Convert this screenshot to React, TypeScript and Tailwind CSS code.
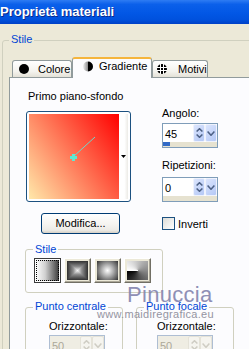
import React from "react";

function ChevUp({ c }: { c: string }) {
  return (
    <svg width="7" height="4" viewBox="0 0 7 4">
      <polyline points="0.6,3.5 3.5,0.7 6.4,3.5" fill="none" stroke={c} strokeWidth="1.5" />
    </svg>
  );
}

function ChevDown({ c, w = 7, h = 4 }: { c: string; w?: number; h?: number }) {
  return (
    <svg width={w} height={h} viewBox={`0 0 ${w} ${h}`}>
      <polyline points={`0.6,0.5 ${w / 2},${h - 0.7} ${w - 0.6},0.5`} fill="none" stroke={c} strokeWidth="1.5" />
    </svg>
  );
}

function Spin({ value, progress, disabled }: { value: string; progress?: boolean; disabled?: boolean }) {
  const c = disabled ? "#CFCDC4" : "#4D6185";
  const btn = disabled
    ? "bg-[#F5F4EF] border border-[#E4E2D8]"
    : "bg-[linear-gradient(135deg,#DBE5FD,#B4C8F6)] border border-[#EEF2FD]";
  return (
    <div
      className={`flex h-[25px] w-[56px] flex-col border ${
        disabled ? "border-[#AEBED3] bg-[#EFEDE3]" : "border-[#7F9DB9] bg-white"
      }`}
    >
      <div className="flex h-[18px]">
        <div className={`flex-1 pl-[2px] pt-[2px] leading-[16px] ${disabled ? "text-[#ACA899]" : "text-black"}`}>
          {value}
        </div>
        <div className={`flex h-full w-[12px] flex-col items-center justify-center gap-[2px] rounded-[2px] ${btn}`}>
          <ChevUp c={c} />
          <ChevDown c={c} />
        </div>
        <div className={`flex h-full w-[12px] items-center justify-center rounded-[2px] ${btn}`}>
          <ChevDown c={c} w={8} h={5} />
        </div>
      </div>
      <div className={`flex-1 ${disabled ? "bg-[#ECE9D8]" : "bg-[#E6E2D0]"}`}>
        {progress && <div className="h-[4px] w-[7px] bg-[#3169C6]" />}
      </div>
    </div>
  );
}

function RaisedBtn({ children }: { children: React.ReactNode }) {
  return (
    <div className="h-[25px] w-[27px] border border-b-[#716F64] border-l-white border-r-[#716F64] border-t-white bg-[#ECE9D8] p-[2px] shadow-[inset_-1px_-1px_0_#ACA899]">
      {children}
    </div>
  );
}

function Group({
  title,
  className,
  legendClass,
  children,
}: {
  title: string;
  className: string;
  legendClass?: string;
  children: React.ReactNode;
}) {
  return (
    <fieldset className={`rounded-[3px] border border-[#D0D0BF] ${className}`}>
      <legend className={`ml-[7px] px-[2px] leading-[13px] text-[#0046D5] ${legendClass ?? ""}`}>{title}</legend>
      {children}
    </fieldset>
  );
}

export default function App() {
  return (
    <div className="relative h-[349px] w-[249px] overflow-hidden bg-[#ECE9D8] font-['Liberation_Sans',Arial,sans-serif] text-[11px] leading-[13px] text-black">
      {/* title bar */}
      <div className="h-[24px] whitespace-nowrap bg-[linear-gradient(180deg,#2E7CF3_0%,#0B60EA_18%,#0257E5_55%,#0051DD_82%,#0040C6_100%)] text-[13px] font-bold leading-[24px] text-white [text-shadow:1px_1px_0_#0B2A8C]">
        Proprietà materiali
      </div>

      <fieldset className="ml-[2px] mt-[9px] w-[300px] rounded-[3px] border border-[#D0D0BF]">
        <legend className="ml-[6px] px-[2px] pb-[2px] leading-[13px] text-[#0046D5]">Stile</legend>

        {/* tabs */}
        <div className="mt-[9px] flex h-[20px] items-end pl-[9px]">
          <div className="flex h-[17px] w-[60px] items-center rounded-t-[3px] border border-b-0 border-[#919B9C] bg-[linear-gradient(180deg,#FFFFFF_0%,#F4F3EE_65%,#E4E1D7_100%)] pl-[6px]">
            <div className="h-[10px] w-[10px] rounded-full bg-black" />
            <span className="ml-[9px]">Colore</span>
          </div>
          <div className="relative z-10 -mb-[1px] flex h-[21px] w-[80px] items-start rounded-t-[3px] border-x border-t-[2px] border-x-[#919B9C] border-t-[#F5B53C] bg-[#FCFCFE] pl-[10px] pt-[1px]">
            <svg width="10" height="11" viewBox="0 0 10 11" className="mt-[1px]">
              <defs>
                <linearGradient id="gi" x1="0" y1="0" x2="1" y2="0">
                  <stop offset="0" stopColor="#F0F0F0" />
                  <stop offset="1" stopColor="#8A8A8A" />
                </linearGradient>
              </defs>
              <path d="M5 0.5 A5 5 0 0 0 5 10.5 Z" fill="url(#gi)" />
              <path d="M5 0.5 A5 5 0 0 1 5 10.5 Z" fill="#000" />
            </svg>
            <span className="ml-[6px]">Gradiente</span>
          </div>
          <div className="flex h-[17px] w-[56px] items-center rounded-t-[3px] border border-b-0 border-[#919B9C] bg-[linear-gradient(180deg,#FFFFFF_0%,#F4F3EE_65%,#E4E1D7_100%)] pl-[4px]">
            <svg width="10" height="10" viewBox="0 0 10 10">
              <circle cx="5" cy="5" r="5" fill="#000" />
              <rect x="3" y="0" width="1" height="10" fill="#fff" />
              <rect x="6" y="0" width="1" height="10" fill="#fff" />
              <rect x="0" y="3" width="10" height="1" fill="#fff" />
              <rect x="0" y="6" width="10" height="1" fill="#fff" />
            </svg>
            <span className="ml-[11px]">Motivi</span>
          </div>
        </div>

        {/* panel */}
        <div className="ml-[6px] w-[280px] border border-[#919B9C] bg-[#FCFCFE] pb-[40px] pl-[15px]">
          <div className="flex">
            <div className="w-[137px]">
              <div className="mt-[12px] pl-[3px]">Primo piano-sfondo</div>
              <div className="ml-[1px] mt-[8px] flex h-[91px] w-[105px] rounded-[3px] border border-[#1C5180] bg-white p-[2px]">
                <div className="relative h-[85px] w-[90px] bg-[linear-gradient(55deg,#FFE8AA_0%,#FF0000_100%)]">
                  <svg width="90" height="85" viewBox="0 0 90 85" className="absolute inset-0">
                    <line x1="44" y1="43" x2="66" y2="23" stroke="#6ED9CC" strokeWidth="1" />
                    <rect x="41" y="42" width="7" height="3" fill="#5FE8D2" />
                    <rect x="43" y="40" width="3" height="7" fill="#5FE8D2" />
                  </svg>
                </div>
                <div className="flex flex-1 items-center justify-center bg-[linear-gradient(90deg,#FFFFFF_60%,#ECEBE6)]">
                  <svg width="5" height="3" viewBox="0 0 5 3">
                    <polygon points="0,0 5,0 2.5,3" fill="#000" />
                  </svg>
                </div>
              </div>
            </div>
            <div className="pt-[29px]">
              <div>Angolo:</div>
              <div className="mt-[3px]">
                <Spin value="45" progress />
              </div>
              <div className="mt-[11px]">Ripetizioni:</div>
              <div className="mt-[5px]">
                <Spin value="0" />
              </div>
            </div>
          </div>

          {/* Modifica / Inverti */}
          <div className="mt-[11px] flex h-[21px] items-center">
            <div className="w-[137px]">
              <div className="ml-[16px] flex h-[21px] w-[79px] items-center justify-center rounded-[3px] border border-[#003C74] bg-[linear-gradient(180deg,#FFFFFF_0%,#F5F4F0_55%,#ECEBE6_85%,#D6D0C5_100%)]">
                Modifica...
              </div>
            </div>
            <div className="h-[13px] w-[13px] border border-[#1C5180] bg-[linear-gradient(135deg,#DCDCD7,#FFFFFF)]" />
            <span className="ml-[3px] mt-[2px]">Inverti</span>
          </div>

          {/* Stile group */}
          <Group title="Stile" className="mt-[9px] w-[138px]">
            <div className="mt-[2px] flex gap-[3px] pb-[9px] pl-[8px]">
              <div className="h-[25px] w-[27px] border border-[#3C3C3C] bg-white p-[1px]">
                <div className="relative h-full w-full bg-[linear-gradient(90deg,#FFFFFF_0%,#D0D0D0_40%,#3A3A3A_100%)]">
                  <div className="absolute inset-0 border border-dotted border-black" />
                </div>
              </div>
              <RaisedBtn>
                <div className="h-full w-full bg-[linear-gradient(90deg,#303030_0%,#8E8E8E_30%,#F4F4F4_50%,#8E8E8E_70%,#303030_100%),linear-gradient(180deg,#303030_0%,#8E8E8E_30%,#F4F4F4_50%,#8E8E8E_70%,#303030_100%)] bg-blend-darken" />
              </RaisedBtn>
              <RaisedBtn>
                <div className="h-full w-full bg-[radial-gradient(circle,#FFFFFF_0%,#B0B0B0_40%,#333333_100%)]" />
              </RaisedBtn>
              <RaisedBtn>
                <div className="h-full w-full bg-[conic-gradient(from_270deg,#FFFFFF,#8A8A8A_50%,#000000)]" />
              </RaisedBtn>
            </div>
          </Group>

          {/* Punto groups */}
          <div className="mt-[7px] flex gap-[13px]">
            <Group title="Punto centrale" legendClass="pb-[2px]" className="h-[60px] w-[98px]">
              <div className="pl-[23px]">
                <div className="mt-[5px]">Orizzontale:</div>
                <div className="mt-[2px]">
                  <Spin value="50" disabled />
                </div>
              </div>
            </Group>
            <Group title="Punto focale" legendClass="pb-[2px]" className="h-[60px] w-[98px]">
              <div className="pl-[20px]">
                <div className="mt-[5px]">Orizzontale:</div>
                <div className="mt-[2px]">
                  <Spin value="50" disabled />
                </div>
              </div>
            </Group>
          </div>
        </div>
      </fieldset>

      {/* watermark */}
      <div className="pointer-events-none absolute left-[127px] top-[283px] text-[22px] leading-[24px] tracking-[0.3px] text-[#8484AE] opacity-90">
        Pinuccia
      </div>
      <div className="pointer-events-none absolute left-[97px] top-[308px] text-[11px] leading-[13px] tracking-[0.3px] text-[#8A8A98] opacity-90">
        www.maidiregrafica.eu
      </div>
    </div>
  );
}
